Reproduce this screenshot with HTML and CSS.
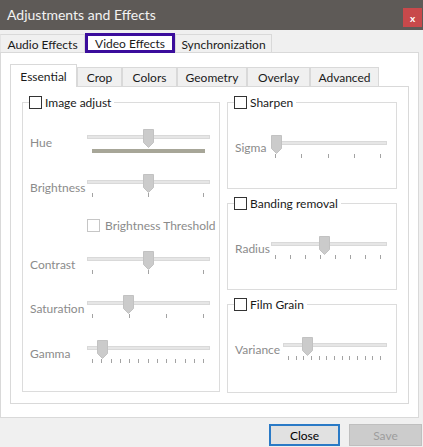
FILE: index.html
```html
<!DOCTYPE html>
<html>
<head>
<meta charset="utf-8">
<link rel="stylesheet" href="styles.css">
</head>
<body>
<div class="window">
  <div class="titlebar">
    <span class="title">Adjustments and Effects</span>
    <span class="close-x">x</span>
  </div>
  <div class="tabs outer-tabs">
    <div class="tab t-audio">Audio Effects</div>
    <div class="tab t-video selected focused">Video Effects</div>
    <div class="tab t-sync">Synchronization</div>
  </div>
  <div class="pane outer-pane">
    <div class="tabs inner-tabs">
      <div class="tab t-ess selected">Essential</div>
      <div class="tab t-crop">Crop</div>
      <div class="tab t-colors">Colors</div>
      <div class="tab t-geo">Geometry</div>
      <div class="tab t-overlay">Overlay</div>
      <div class="tab t-adv">Advanced</div>
    </div>
    <div class="pane inner-pane">
      <fieldset class="group group-main">
        <legend><span class="cb"></span><span>Image adjust</span></legend>
        <div class="rows-left">
          <div class="row"><span class="lbl">Hue</span>
            <div class="slider"><div class="track"></div><svg class="handle" style="left:56px" width="11" height="19" viewBox="0 0 11 19"><path d="M0.5 0.5H10.5V13.5L5.5 18.5L0.5 13.5Z"/></svg><div class="huebar"></div></div>
          </div>
          <div class="row"><span class="lbl">Brightness</span>
            <div class="slider"><div class="track"></div><svg class="handle" style="left:56px" width="11" height="19" viewBox="0 0 11 19"><path d="M0.5 0.5H10.5V13.5L5.5 18.5L0.5 13.5Z"/></svg><div class="ticks"><i></i><i></i><i></i></div></div>
          </div>
          <div class="row row-check"><span class="lbl"></span>
            <label class="subcheck"><span class="cb cb-dis"></span><span>Brightness Threshold</span></label>
          </div>
          <div class="row row-44"><span class="lbl">Contrast</span>
            <div class="slider"><div class="track"></div><svg class="handle" style="left:56px" width="11" height="19" viewBox="0 0 11 19"><path d="M0.5 0.5H10.5V13.5L5.5 18.5L0.5 13.5Z"/></svg><div class="ticks"><i></i><i></i><i></i></div></div>
          </div>
          <div class="row"><span class="lbl">Saturation</span>
            <div class="slider"><div class="track"></div><svg class="handle" style="left:36px" width="11" height="19" viewBox="0 0 11 19"><path d="M0.5 0.5H10.5V13.5L5.5 18.5L0.5 13.5Z"/></svg><div class="ticks"><i></i><i></i><i></i><i></i></div></div>
          </div>
          <div class="row"><span class="lbl">Gamma</span>
            <div class="slider"><div class="track"></div><svg class="handle" style="left:10px" width="11" height="19" viewBox="0 0 11 19"><path d="M0.5 0.5H10.5V13.5L5.5 18.5L0.5 13.5Z"/></svg><div class="ticks"><i></i><i></i><i></i><i></i><i></i><i></i><i></i><i></i><i></i><i></i><i></i><i></i><i></i></div></div>
          </div>
        </div>
      </fieldset>
      <div class="col-right">
        <fieldset class="group group-side g1">
          <legend><span class="cb"></span><span>Sharpen</span></legend>
          <div class="row-side"><span class="lbl">Sigma</span>
            <div class="slider"><div class="track"></div><svg class="handle" style="left:0px" width="11" height="19" viewBox="0 0 11 19"><path d="M0.5 0.5H10.5V13.5L5.5 18.5L0.5 13.5Z"/></svg><div class="ticks"><i></i><i></i><i></i><i></i><i></i></div></div>
          </div>
        </fieldset>
        <fieldset class="group group-side g2">
          <legend><span class="cb"></span><span>Banding removal</span></legend>
          <div class="row-side"><span class="lbl">Radius</span>
            <div class="slider"><div class="track"></div><svg class="handle" style="left:48px" width="11" height="19" viewBox="0 0 11 19"><path d="M0.5 0.5H10.5V13.5L5.5 18.5L0.5 13.5Z"/></svg><div class="ticks"><i></i><i></i><i></i><i></i><i></i><i></i><i></i><i></i></div></div>
          </div>
        </fieldset>
        <fieldset class="group group-side g3">
          <legend><span class="cb"></span><span>Film Grain</span></legend>
          <div class="row-side row-wide"><span class="lbl">Variance</span>
            <div class="slider"><div class="track"></div><svg class="handle" style="left:19px" width="11" height="19" viewBox="0 0 11 19"><path d="M0.5 0.5H10.5V13.5L5.5 18.5L0.5 13.5Z"/></svg><div class="ticks"><i></i><i></i><i></i><i></i><i></i><i></i><i></i><i></i><i></i><i></i><i></i><i></i><i></i></div></div>
          </div>
        </fieldset>
      </div>
    </div>
  </div>
  <div class="buttons">
    <button class="btn btn-default">Close</button>
    <button class="btn btn-disabled">Save</button>
  </div>
</div>
</body>
</html>
```

FILE: styles.css
```css
html, body {
  margin: 0;
  padding: 0;
}
body {
  background: #f0f0f0;
  font-family: Lato, "Open Sans", sans-serif;
  font-size: 12px;
  color: #1a1a1a;
}
.window {
  width: 423px;
  height: 447px;
  overflow: hidden;
}
.titlebar {
  height: 30px;
  background: #5e5a57;
  display: flex;
  align-items: flex-start;
  justify-content: space-between;
}
.title {
  color: #f2f2f2;
  font-size: 14px;
  line-height: 30px;
  padding-left: 7px;
}
.close-x {
  width: 19px;
  height: 19px;
  margin-top: 8px;
  margin-right: 1px;
  background: #c8494b;
  color: #fff;
  font-size: 10px;
  font-weight: bold;
  display: flex;
  align-items: center;
  justify-content: center;
  line-height: 1;
}
.tabs {
  display: flex;
  align-items: flex-end;
  position: relative;
  z-index: 1;
}
.tab {
  box-sizing: border-box;
  border: 1px solid #d9d9d9;
  border-bottom: none;
  background: #f0f0f0;
  display: flex;
  align-items: center;
  justify-content: center;
  white-space: nowrap;
}
.tab.selected {
  background: #fff;
  margin-bottom: -1px;
}
.outer-tabs {
  height: 19px;
  margin-top: 3px;
}
.outer-tabs .tab {
  height: 18px;
  padding-top: 1px;
}
.outer-tabs .tab.selected {
  height: 20px;
}
.tab.focused {
  border: 3px solid #3b0d9c;
  padding-top: 0;
}
.t-audio { width: 85px; border-left-color: #e4e4e4; }
.t-video { width: 90px; }
.t-sync { width: 97px; }

.pane {
  box-sizing: border-box;
  border: 1px solid #d9d9d9;
  background: #fff;
}
.outer-pane {
  width: 419px;
  height: 366px;
  padding: 11px 0 0 9px;
}
.inner-tabs {
  height: 22px;
}
.inner-tabs .tab {
  height: 19px;
}
.inner-tabs .tab.selected {
  height: 23px;
}
.t-ess { width: 67px; }
.t-crop { width: 45px; }
.t-colors { width: 55px; }
.t-geo { width: 70px; }
.t-overlay { width: 63px; }
.t-adv { width: 69px; }

.inner-pane {
  width: 399px;
  height: 318px;
  display: flex;
  gap: 7px;
  padding: 9px 0 0 11px;
}
.group {
  margin: 0;
  padding: 0;
  border: 1px solid #dcdcdc;
  min-width: 0;
  box-sizing: border-box;
}
.group legend {
  margin-left: 6px;
  padding: 0 3px 0 0;
  display: flex;
  align-items: center;
  gap: 3px;
  height: 13px;
  line-height: 13px;
  font-size: 12px;
}
.cb {
  box-sizing: border-box;
  width: 13px;
  height: 13px;
  border: 1px solid #333;
  background: #fff;
  display: inline-block;
  flex: none;
}
.cb-dis {
  border-color: #c6c6c6;
}
.group-main {
  width: 198px;
  height: 296px;
}
.rows-left {
  padding: 20px 9px 0 7px;
}
.row {
  display: grid;
  grid-template-columns: 57px 123px;
  height: 45px;
}
.row-44 { height: 44px; }
.row-check { height: 32px; }
.lbl {
  color: #8b8b8b;
  font-size: 12px;
  line-height: 15px;
  padding-top: 6px;
}
.subcheck {
  display: flex;
  align-items: center;
  gap: 5px;
  height: 13px;
  color: #8b8b8b;
  font-size: 12px;
  white-space: nowrap;
}
.slider {
  position: relative;
  height: 24px;
}
.track {
  position: relative;
  top: 6px;
  height: 4px;
  box-sizing: border-box;
  background: #e6e6e6;
  border: 1px solid #d9d9d9;
}
.handle {
  position: absolute;
  top: 0;
}
.handle path {
  fill: #cbcbcb;
  stroke: #c2c2c2;
  stroke-width: 1;
}
.ticks {
  position: absolute;
  top: 19px;
  left: 5px;
  right: 6px;
  height: 4px;
  display: flex;
  justify-content: space-between;
}
.ticks i {
  width: 1px;
  height: 4px;
  background: #a3a3a3;
}
.huebar {
  position: absolute;
  top: 20px;
  left: 5px;
  right: 5px;
  height: 4px;
  background: #a7a698;
}
.col-right {
  display: flex;
  flex-direction: column;
  gap: 8px;
}
.group-side {
  width: 170px;
}
.g1 { height: 93px; }
.g2 { height: 93px; }
.g3 { height: 95px; }
.row-side {
  display: grid;
  grid-template-columns: 36px 116px;
  padding: 26px 9px 0 7px;
}
.row-side.row-wide {
  grid-template-columns: 48px 104px;
}
.row-side .lbl {
  padding-top: 5px;
}
.row-side .ticks {
  left: 4px;
  right: 6px;
}
.row-wide .ticks {
  left: 5px;
}
.buttons {
  display: flex;
  justify-content: flex-end;
  gap: 9px;
  margin-top: 6px;
  padding-right: 1px;
}
.btn {
  box-sizing: border-box;
  height: 22px;
  font-family: Lato, "Open Sans", sans-serif;
  font-size: 12px;
  padding: 0;
  margin: 0;
}
.btn-default {
  width: 71px;
  background: #e1e1e1;
  border: 2px solid #2a7ac6;
  color: #000;
}
.btn-disabled {
  width: 73px;
  background: #cccccc;
  border: 1px solid #bfbfbf;
  color: #9d9d9d;
}
```
